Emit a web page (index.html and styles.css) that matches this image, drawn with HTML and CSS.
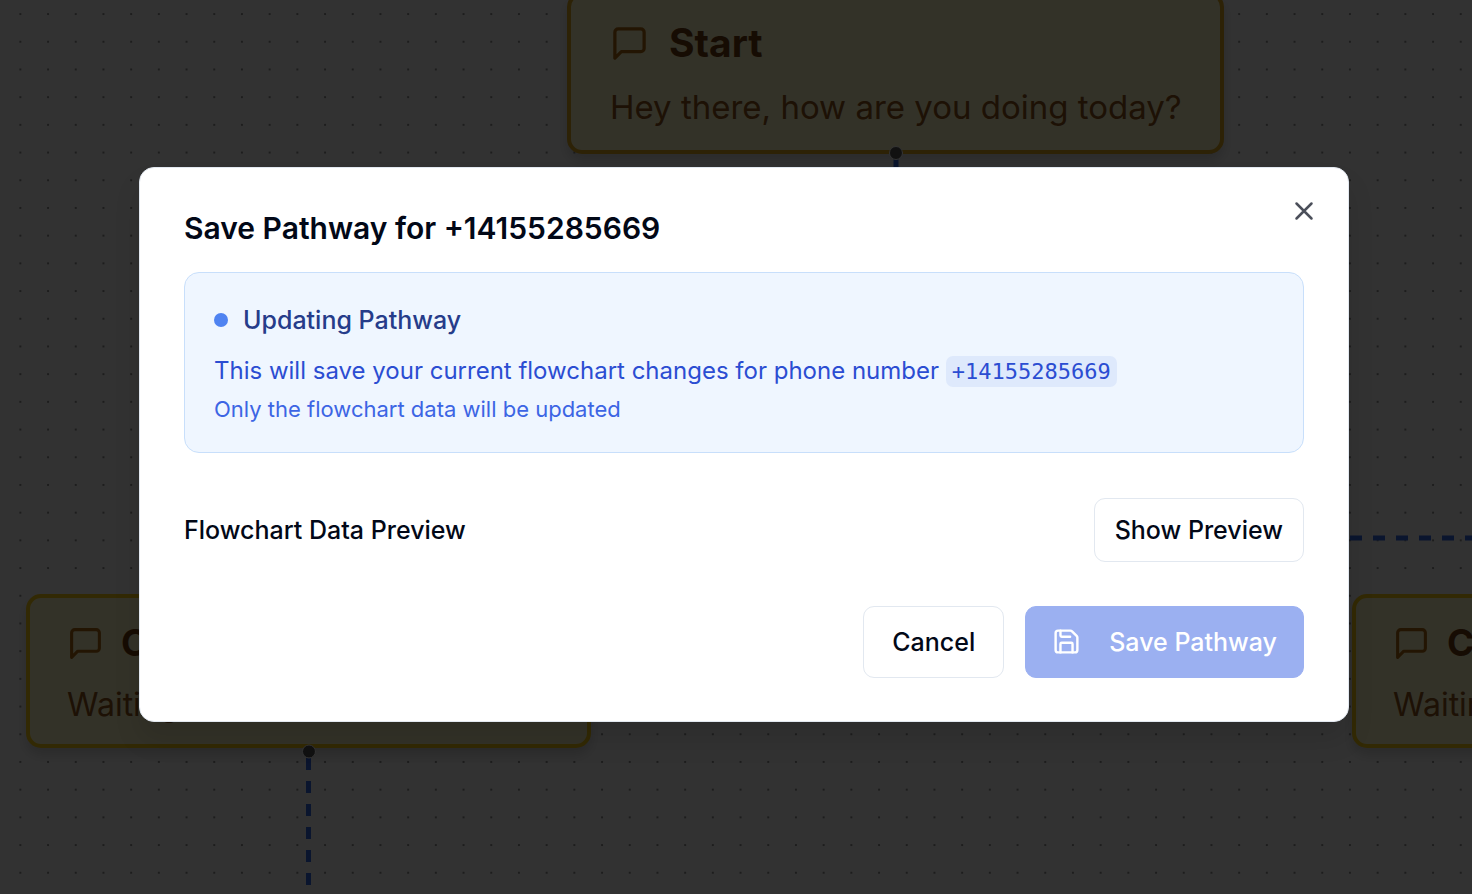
FILE: index.html
```html
<!DOCTYPE html>
<html lang="en">
<head>
<meta charset="utf-8">
<meta name="viewport" content="width=device-width, initial-scale=1">
<title>Save Pathway</title>
<link rel="stylesheet" href="styles.css">
</head>
<body>
<svg class="symbols" aria-hidden="true">
  <symbol id="message" viewBox="0 0 24 24"><path d="M21 15a2 2 0 0 1-2 2H7l-4 4V5a2 2 0 0 1 2-2h14a2 2 0 0 1 2 2z"/></symbol>
</svg>

<main class="canvas" aria-hidden="true">
  <svg class="layer">
    <defs>
      <pattern id="dots" x="6.5" y="0.2" width="27.7" height="27.7" patternUnits="userSpaceOnUse">
        <circle class="dot" cx="13.85" cy="13.85" r="1"/>
      </pattern>
    </defs>
    <rect width="100%" height="100%" fill="url(#dots)"/>
    <path class="edge" d="M896 159V300"/>
    <path class="edge" d="M308.500 758V885"/>
    <path class="edge" d="M1350 538H1480"/>
  </svg>

  <article class="node node-start">
    <header class="node-head"><svg class="node-icon"><use href="#message"/></svg><h2 class="node-title">Start</h2></header>
    <p class="node-text">Hey there, how are you doing today?</p>
  </article>
  <article class="node node-small node-left">
    <header class="node-head"><svg class="node-icon"><use href="#message"/></svg><h2 class="node-title">C</h2></header>
    <p class="node-text">Waiting</p>
  </article>
  <article class="node node-small node-right">
    <header class="node-head"><svg class="node-icon"><use href="#message"/></svg><h2 class="node-title">C</h2></header>
    <p class="node-text">Waiting</p>
  </article>

  <svg class="layer">
    <circle class="handle" cx="896" cy="153" r="6.500"/>
    <circle class="handle" cx="309" cy="751.500" r="6.500"/>
  </svg>
</main>

<div class="overlay">
  <section class="dialog" role="dialog" aria-modal="true" aria-labelledby="dialog-title">
    <button class="close" type="button" aria-label="Close">
      <svg class="close-icon" viewBox="0 0 24 24"><path d="M18 6 6 18M6 6l12 12"/></svg>
    </button>
    <h1 class="dialog-title" id="dialog-title">Save Pathway for +14155285669</h1>

    <div class="notice">
      <h2 class="notice-title"><span class="notice-dot"></span>Updating Pathway</h2>
      <p class="notice-text">This will save your current flowchart changes for phone number <code class="phone">+14155285669</code></p>
      <p class="notice-hint">Only the flowchart data will be updated</p>
    </div>

    <div class="preview">
      <h2 class="preview-title">Flowchart Data Preview</h2>
      <button class="button button-small" type="button">Show Preview</button>
    </div>

    <footer class="actions">
      <button class="button" type="button">Cancel</button>
      <button class="button button-primary" type="button" disabled>
        <svg class="save-icon" viewBox="0 0 24 24"><path d="M15.200 3a2 2 0 0 1 1.400.6l3.800 3.800a2 2 0 0 1 .6 1.400V19a2 2 0 0 1-2 2H5a2 2 0 0 1-2-2V5a2 2 0 0 1 2-2z"/><path d="M17 21v-7a1 1 0 0 0-1-1H8a1 1 0 0 0-1 1v7"/><path d="M7 3v4a1 1 0 0 0 1 1h7"/></svg>
        Save Pathway
      </button>
    </footer>
  </section>
</div>
</body>
</html>
```
FILE: styles.css
```css
* {
  box-sizing: border-box;
}

body,
h1,
h2,
p {
  margin: 0;
}

body {
  font-family: Inter, "Liberation Sans", sans-serif;
  color: #020817;
}

svg {
  flex: none;
  fill: none;
  stroke: currentColor;
  stroke-width: 2;
  stroke-linecap: round;
  stroke-linejoin: round;
}

.symbols {
  display: none;
}

/* Flow canvas */
.canvas {
  position: fixed;
  inset: 0;
  overflow: hidden;
  background: #fafafa;
}

.layer {
  position: absolute;
  inset: 0;
  width: 100%;
  height: 100%;
  stroke: none;
}

.dot {
  fill: #707070;
}

.edge {
  stroke: #3468e4;
  stroke-width: 5;
  stroke-linecap: butt;
  stroke-dasharray: 12 11;
}

.handle {
  fill: #555555;
  stroke: #ffffff;
  stroke-width: 1;
}

.node {
  position: absolute;
  padding: 24px 39px;
  border: 4px solid #facc15;
  border-radius: 15px;
  background: #fef9c8;
  box-shadow: 0 7px 12px rgba(0, 0, 0, 0.15);
  white-space: nowrap;
}

.node-start {
  top: -8px;
  left: 567px;
  width: 657px;
  height: 162px;
  border-color: #e0aa20;
}

.node-small {
  top: 594px;
  width: 565px;
  height: 154px;
  padding: 22px 37px;
}

.node-left {
  left: 26px;
}

.node-right {
  left: 1352px;
}

.node-head {
  display: flex;
  align-items: center;
  gap: 20px;
}

.node-icon {
  width: 39px;
  height: 39px;
  color: #b06a10;
}

.node-title {
  font-size: 39px;
  font-weight: 700;
  line-height: 46px;
  color: #713f12;
}

.node-text {
  margin-top: 18px;
  font-size: 33px;
  line-height: 46px;
  color: #92551a;
}

.node-small .node-head {
  gap: 17px;
}

.node-small .node-icon {
  width: 37px;
  height: 37px;
}

.node-small .node-title {
  font-size: 37px;
}

.node-small .node-text {
  margin-top: 16px;
  font-size: 32px;
}

/* Dialog */
.overlay {
  position: fixed;
  inset: 0;
  display: flex;
  align-items: center;
  justify-content: center;
  padding: 0 0 6px 16px;
  background: rgba(0, 0, 0, 0.8);
}

.dialog {
  position: relative;
  display: flex;
  flex-direction: column;
  width: 100%;
  max-width: 1210px;
  padding: 43px 44px;
  border: 1px solid #e2e8f0;
  border-radius: 15px;
  background: #ffffff;
  box-shadow: 0 18px 27px rgba(0, 0, 0, 0.1);
}

.close {
  position: absolute;
  top: 28px;
  right: 29px;
  display: flex;
  padding: 0;
  border: 0;
  background: none;
  color: #4b4f5a;
}

.close-icon {
  width: 30px;
  height: 30px;
}

.dialog-title {
  font-size: 30px;
  font-weight: 600;
  line-height: 34px;
}

.notice {
  margin: 27px 0 45px;
  padding: 28px 29px;
  border: 1px solid #c8dffb;
  border-radius: 15px;
  background: #eff6ff;
}

.notice-title {
  display: flex;
  align-items: center;
  gap: 15px;
  font-size: 25px;
  font-weight: 500;
  line-height: 38px;
  color: #263c8a;
}

.notice-dot {
  width: 14px;
  height: 14px;
  border-radius: 50%;
  background: #4f83f1;
}

.notice-text {
  margin: 13px 0 5px;
  font-size: 24px;
  line-height: 38px;
  color: #2b4dd2;
}

.phone {
  padding: 3px 6px;
  border-radius: 7px;
  background: #dee9fc;
  font-family: "DejaVu Sans Mono", monospace;
  font-size: 22px;
  line-height: 1;
}

.notice-hint {
  font-size: 22px;
  line-height: 29px;
  color: #3c65e4;
}

.preview {
  display: flex;
  align-items: center;
  justify-content: space-between;
}

.preview-title {
  font-size: 25px;
  font-weight: 500;
}

.actions {
  display: flex;
  justify-content: flex-end;
  gap: 21px;
  margin-top: 44px;
}

.button {
  display: flex;
  align-items: center;
  gap: 28px;
  padding: 16px 28px;
  border: 1px solid #e2e8f0;
  border-radius: 11px;
  background: #ffffff;
  font-family: inherit;
  font-size: 25px;
  font-weight: 500;
  line-height: 38px;
  color: #020817;
}

.button-small {
  padding: 13px 20px;
  line-height: 36px;
}

.button-primary {
  padding: 16px 26px;
  border-color: #9bb0f1;
  background: #9bb0f1;
  color: #ffffff;
}

.save-icon {
  width: 29px;
  height: 29px;
}
```
